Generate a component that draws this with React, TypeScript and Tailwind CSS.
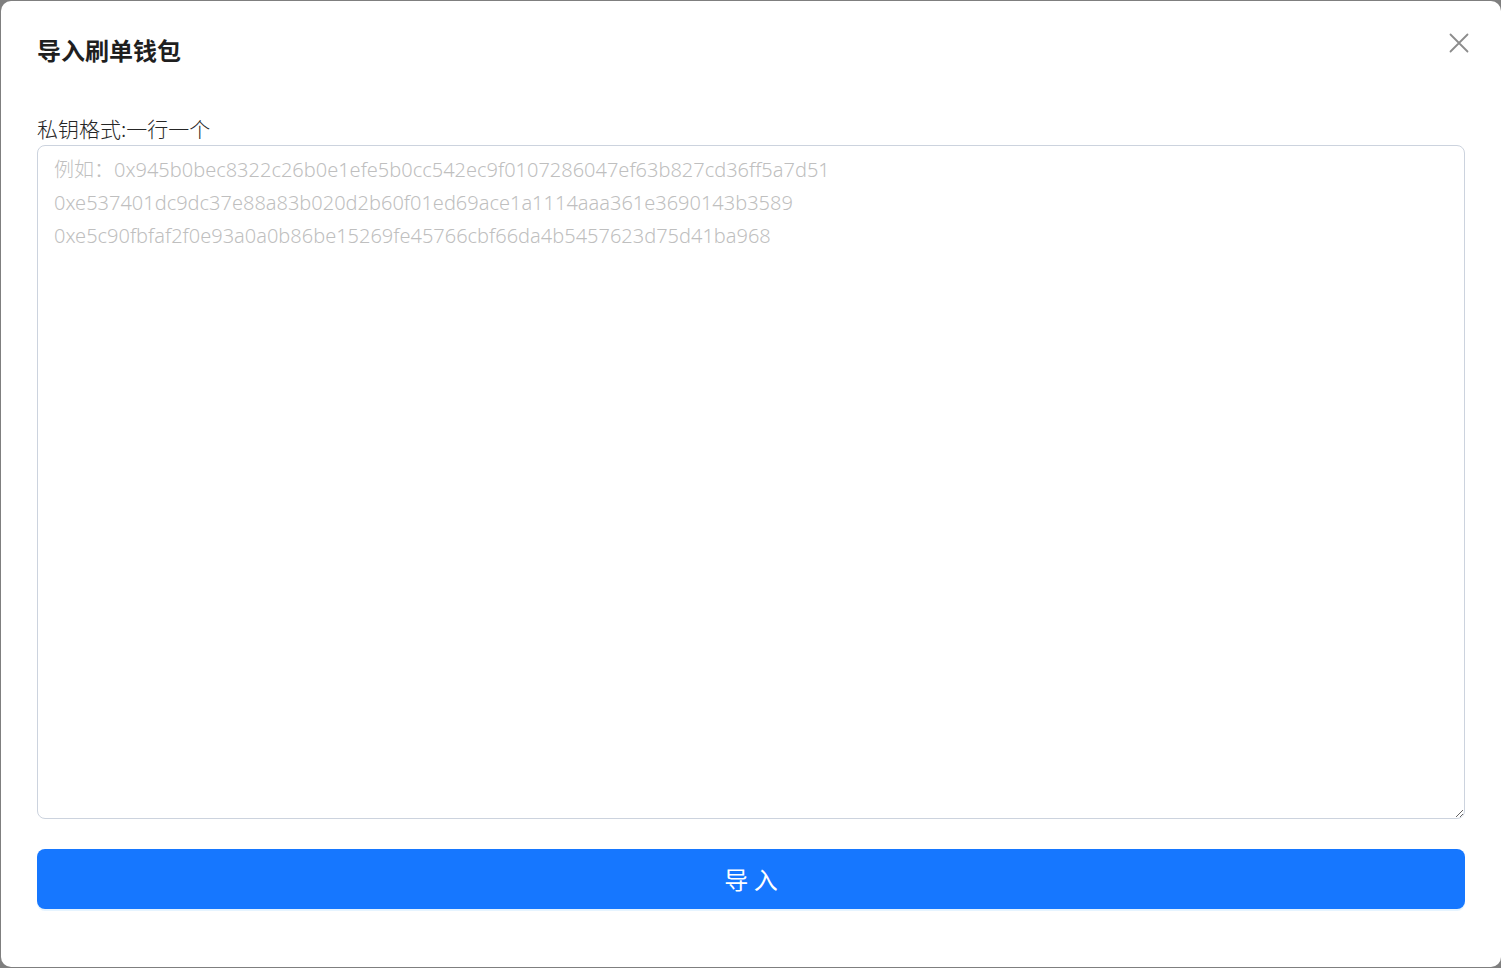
import React from "react";

const placeholder =
  "例如：0x945b0bec8322c26b0e1efe5b0cc542ec9f0107286047ef63b827cd36ff5a7d51\n0xe537401dc9dc37e88a83b020d2b60f01ed69ace1a1114aaa361e3690143b3589\n0xe5c90fbfaf2f0e93a0a0b86be15269fe45766cbf66da4b5457623d75d41ba968";

export default function App() {
  return (
    <div
      className="w-[1501px] h-[968px] bg-[#7f7f7f] pt-[1px] pl-[1px] overflow-hidden"
      style={{ fontFamily: '"Noto Sans", "Noto Sans CJK SC", sans-serif' }}
    >
      <div className="w-[1500px] h-[966px] bg-white rounded-[10px] flex flex-col px-[36px] pt-[36px]">
        <div className="flex items-center justify-between h-[26px]">
          <div className="text-[24px] leading-[26px] font-bold text-[#1f1f1f]" style={{ fontFamily: '"Noto Sans CJK SC", sans-serif' }}>
            导入刷单钱包
          </div>
          <button className="w-[24px] h-[24px] flex items-center justify-center mr-[-6px] mt-[-14px] text-[#8c8c8c]">
            <svg width="20" height="20" viewBox="0 0 20 20" fill="none" stroke="currentColor" strokeWidth="1.8" strokeLinecap="round">
              <path d="M1.5 1.5 L18.5 18.5 M18.5 1.5 L1.5 18.5" />
            </svg>
          </button>
        </div>
        <div
          className="mt-[53px] h-[24px] text-[21px] leading-[24px] text-[#262626] font-light"
          style={{ fontFamily: '"Noto Sans CJK SC", sans-serif' }}
        >
          私钥格式:一行一个
        </div>
        <textarea
          className="mt-[5px] h-[674px] w-full border border-[#ccd3de] rounded-[8px] px-[16px] pt-[7px] text-[20px] leading-[33px] font-light text-[#262626] placeholder:text-[#bfbfbf] outline-none resize-y"
          placeholder={placeholder}
        />
        <button
          className="mt-[30px] h-[60px] w-full rounded-[8px] bg-[#1677ff] text-white text-[24px] shadow-[0_2px_0_rgba(5,145,255,0.1)]"
          style={{ fontFamily: '"Noto Sans CJK SC", sans-serif' }}
        >
          导 入
        </button>
      </div>
    </div>
  );
}
